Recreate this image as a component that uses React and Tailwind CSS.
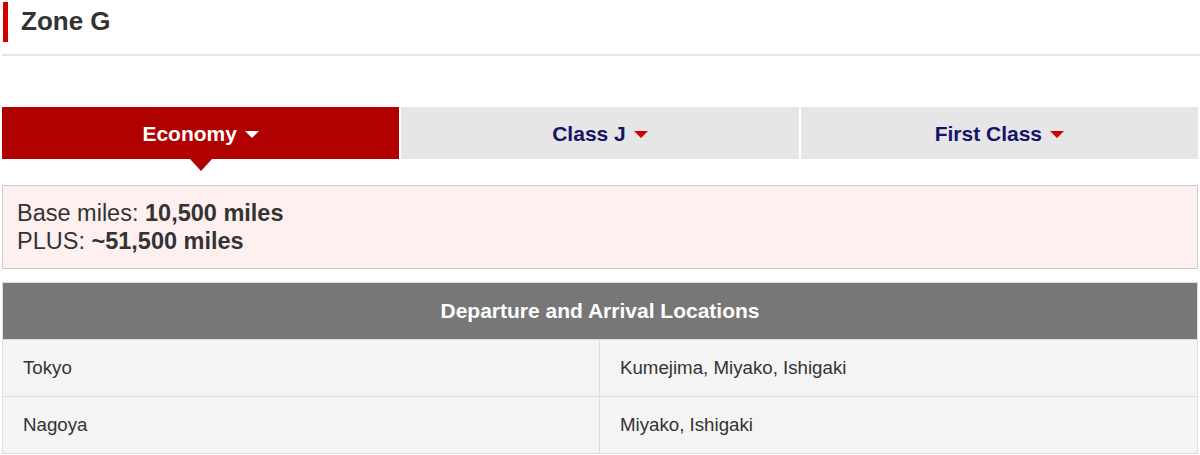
import React, { useState } from 'react';

const tabs = ['Economy', 'Class J', 'First Class'];

const routes = [
  { from: 'Tokyo', to: 'Kumejima, Miyako, Ishigaki' },
  { from: 'Nagoya', to: 'Miyako, Ishigaki' }
];

const Caret = ({ active }) => (
  <span
    className={`inline-block ml-2 w-0 h-0 border-l-[7px] border-r-[7px] border-t-[7px] border-l-transparent border-r-transparent ${
      active ? 'border-t-white' : 'border-t-[#d00000]'
    }`}
  />
);

const App = () => {
  const [activeTab, setActiveTab] = useState('Economy');

  return (
    <div className="w-[1200px] pt-[2px] text-[#333] font-['Liberation_Sans']">
      {/* Header */}
      <div className="pl-[3px]">
        <h2 className="h-[40px] border-l-[5px] border-[#d00000] pl-[13px] flex items-center text-[26px] font-bold leading-none pb-[2px]">
          Zone G
        </h2>
      </div>
      <div className="mt-[12px] ml-[2px] border-b-2 border-[#e6e6e6]" />

      {/* Tabs */}
      <div className="mt-[51px] mx-[2px] w-[1196px] flex gap-[2px]">
        {tabs.map(tab => (
          <button
            key={tab}
            onClick={() => setActiveTab(tab)}
            className={`relative flex-1 h-[52px] flex items-center justify-center text-[21px] font-bold pt-[2px] ${
              activeTab === tab
                ? 'bg-[#b10000] text-white'
                : 'bg-[#e6e6e6] text-[#15146a]'
            }`}
          >
            {tab}
            <Caret active={activeTab === tab} />
            {activeTab === tab && (
              <span className="absolute left-1/2 -translate-x-1/2 top-full w-0 h-0 border-l-[11px] border-r-[11px] border-t-[12px] border-l-transparent border-r-transparent border-t-[#b10000]" />
            )}
          </button>
        ))}
      </div>

      {/* Miles */}
      <div className="mt-[26px] mx-[2px] w-[1196px] h-[84px] border border-[#cccccc] bg-[#fff0f0] px-[14px] flex flex-col justify-center text-[23.5px] leading-[28px]">
        <div>
          Base miles: <span className="font-bold">10,500 miles</span>
        </div>
        <div>
          PLUS: <span className="font-bold">~51,500 miles</span>
        </div>
      </div>

      {/* Table */}
      <div className="mt-[13px] mx-[2px] w-[1196px] border border-[#dddddd]">
        <div className="h-[56px] bg-[#777777] text-white font-bold text-[21px] flex items-center justify-center">
          Departure and Arrival Locations
        </div>
        {routes.map(r => (
          <div key={r.from} className="grid grid-cols-2 h-[57px] bg-[#f4f4f4] border-t border-[#dddddd] text-[18.7px]">
            <div className="flex items-center pl-[20px] border-r border-[#dddddd]">{r.from}</div>
            <div className="flex items-center pl-[20px]">{r.to}</div>
          </div>
        ))}
      </div>
    </div>
  );
};

export default App;
